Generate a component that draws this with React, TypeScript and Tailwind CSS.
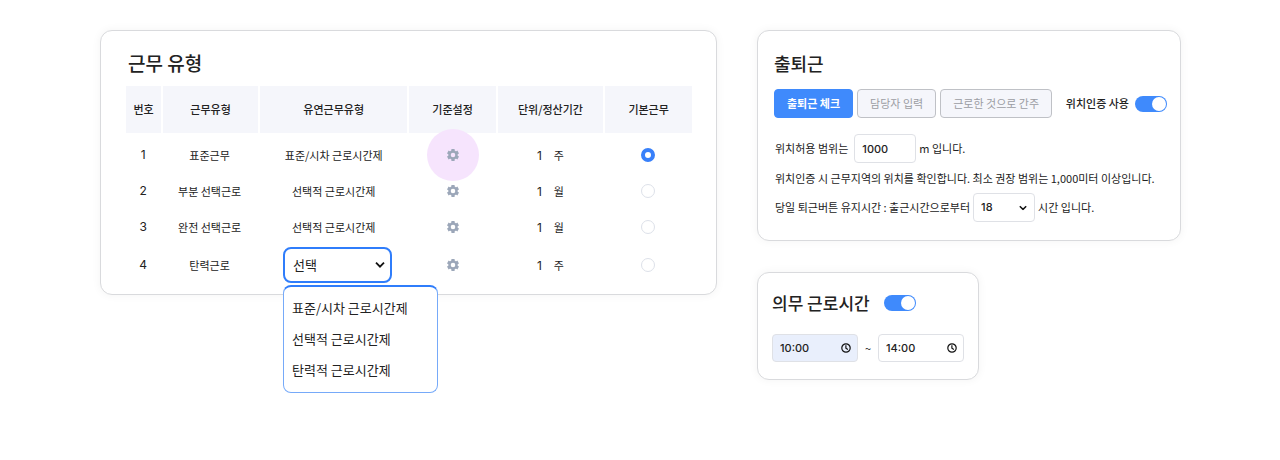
import React, { useState } from "react";

const workTypes = [
  { id: 1, name: "표준근무", flex: "표준/시차 근로시간제", unit: "주" },
  { id: 2, name: "부분 선택근로", flex: "선택적 근로시간제", unit: "월" },
  { id: 3, name: "완전 선택근로", flex: "선택적 근로시간제", unit: "월" },
  { id: 4, name: "탄력근로", flex: "", unit: "주" },
];

const flexOptions = ["표준/시차 근로시간제", "선택적 근로시간제", "탄력적 근로시간제"];

const checkModes = ["출퇴근 체크", "담당자 입력", "근로한 것으로 간주"];

const cardClass =
  "rounded-xl border border-[#d9dadd] bg-white shadow-[0_0_10px_rgba(0,0,0,0.05)]";

const Chevron: React.FC<{ className: string }> = ({ className }) => (
  <svg
    viewBox="0 0 10 7"
    fill="none"
    stroke="#111"
    strokeWidth="1.8"
    aria-hidden="true"
    className={`pointer-events-none absolute top-1/2 -translate-y-1/2 ${className}`}
  >
    <path d="M1 1.2l4 4 4-4" />
  </svg>
);

const GearIcon: React.FC = () => (
  <svg
    viewBox="0 0 12 12"
    fill="none"
    stroke="currentColor"
    aria-hidden="true"
    className="relative size-3"
  >
    <circle cx="6" cy="6" r="3.5" strokeWidth="2.4" />
    <path
      strokeWidth="3.2"
      d="M6 0v2.6M6 9.4V12M0.8 3l2.3 1.3M8.9 7.7L11.2 9M0.8 9l2.3-1.3M8.9 4.3L11.2 3"
    />
  </svg>
);

const Toggle: React.FC<{ label: string }> = ({ label }) => {
  const [on, setOn] = useState(true);
  return (
    <button
      type="button"
      role="switch"
      aria-checked={on}
      aria-label={label}
      onClick={() => setOn(!on)}
      className={`flex h-4 w-8 shrink-0 items-center rounded-full px-px ${
        on ? "justify-end bg-[#3f8afc]" : "justify-start bg-gray-300"
      }`}
    >
      <span className="size-[14px] rounded-full bg-white" />
    </button>
  );
};

const TimeField: React.FC<{ label: string; value: string; active?: boolean }> = ({
  label,
  value,
  active,
}) => (
  <div className="relative">
    <input
      type="text"
      aria-label={label}
      defaultValue={value}
      className={`block h-7 w-[86px] rounded border border-[#dfe1e6] pl-[7px] font-['Inter',sans-serif] text-[11px] font-medium text-[#222] ${
        active ? "bg-[#e9effc]" : "bg-white"
      }`}
    />
    <svg
      viewBox="0 0 10 10"
      fill="none"
      stroke="#111"
      strokeWidth="1.2"
      aria-hidden="true"
      className="pointer-events-none absolute right-[7px] top-1/2 size-[10px] -translate-y-1/2"
    >
      <circle cx="5" cy="5" r="4.2" />
      <path d="M4.9 2.3v2.9l2 1.3" />
    </svg>
  </div>
);

const WorkTypeCard: React.FC = () => {
  const [selected, setSelected] = useState(1);

  return (
    <section className={`${cardClass} pb-[9px] pl-[25px] pr-6 pt-[18px]`}>
      <h2 className="mb-[9px] pl-[2px] text-[19px] font-medium leading-7">근무 유형</h2>
      <table className="w-full table-fixed border-collapse text-center text-[11px]">
        <colgroup>
          <col className="w-[6.4%]" />
          <col className="w-[17.1%]" />
          <col className="w-[26.4%]" />
          <col className="w-[15.6%]" />
          <col className="w-[19%]" />
          <col className="w-[15.5%]" />
        </colgroup>
        <thead>
          <tr className="h-[47px]">
            {["번호", "근무유형", "유연근무유형", "기준설정", "단위/정산기간", "기본근무"].map(
              (head) => (
                <th
                  key={head}
                  className="border-r-2 border-white bg-[#f5f6fb] bg-clip-padding font-medium last:border-r-0"
                >
                  {head}
                </th>
              )
            )}
          </tr>
        </thead>
        <tbody className="before:block before:h-1">
          {workTypes.map((row) => (
            <tr key={row.id} className="h-9 last:h-10">
              <td className="pr-[2px] font-['Inter',sans-serif] text-xs">{row.id}</td>
              <td className="pr-[2px]">{row.name}</td>
              <td>
                {row.flex || (
                  <div className="relative ml-6 w-[109px] text-[13px]">
                    <select
                      aria-label="유연근무유형"
                      className="block h-9 w-full appearance-none rounded-lg border-2 border-[#2f7dfb] bg-white pl-2"
                    >
                      <option>선택</option>
                    </select>
                    <Chevron className="right-[7px] w-[10px]" />
                    {/* Option list */}
                    <ul
                      role="listbox"
                      aria-label="유연근무유형"
                      className="absolute left-0 top-[38px] z-10 w-[155px] rounded-lg border border-t-2 border-[#76aaf9] border-t-[#2f7dfb] bg-white pb-[7px] pt-[5px] text-left"
                    >
                      {flexOptions.map((option) => (
                        <li key={option} role="option" aria-selected={false}>
                          <button type="button" className="block h-[31px] w-full pl-2 text-left">
                            {option}
                          </button>
                        </li>
                      ))}
                    </ul>
                  </div>
                )}
              </td>
              <td>
                <button
                  type="button"
                  aria-label={`${row.name} 기준설정`}
                  className="relative mx-auto block size-3 text-[#9ca7b9]"
                >
                  {row.id === 1 && (
                    <span className="absolute left-1/2 top-1/2 size-[52px] -translate-x-1/2 -translate-y-1/2 rounded-full bg-[#f6e4fd]" />
                  )}
                  <GearIcon />
                </button>
              </td>
              <td>
                <span className="mr-3 font-['Inter',sans-serif] text-xs">1</span>
                {row.unit}
              </td>
              <td>
                <input
                  type="radio"
                  name="defaultWork"
                  aria-label={`${row.name} 기본근무`}
                  checked={selected === row.id}
                  onChange={() => setSelected(row.id)}
                  className="mx-auto block size-[14px] appearance-none rounded-full border border-[#dde1e9] bg-white checked:border-4 checked:border-[#3880fa]"
                />
              </td>
            </tr>
          ))}
        </tbody>
      </table>
    </section>
  );
};

const AttendanceCard: React.FC = () => {
  const [mode, setMode] = useState(checkModes[0]);

  return (
    <section className={`${cardClass} pb-[18px] pl-4 pr-[13px] pt-[18px]`}>
      <h2 className="mb-3 text-[18px] font-medium leading-7">출퇴근</h2>
      <div className="flex items-center text-[11px]">
        <div className="flex gap-1">
          {checkModes.map((item) => (
            <button
              key={item}
              type="button"
              onClick={() => setMode(item)}
              className={`h-[29px] whitespace-nowrap rounded border px-3 ${
                item === mode
                  ? "border-[#3f8afc] bg-[#3f8afc] font-bold text-white"
                  : "border-[#bfc1c6] bg-[#f5f6fb] text-[#9b9da3]"
              }`}
            >
              {item}
            </button>
          ))}
        </div>
        <div className="ml-auto flex items-center gap-[6px]">
          <span className="whitespace-nowrap font-medium">위치인증 사용</span>
          <Toggle label="위치인증 사용" />
        </div>
      </div>

      <div className="mt-4 flex flex-col gap-[7px] pl-px text-[11px]">
        <div className="flex items-center">
          <label htmlFor="range">위치허용 범위는</label>
          <input
            id="range"
            type="text"
            defaultValue="1000"
            className="ml-[6px] mr-[3px] h-[29px] w-[62px] rounded border border-[#dfe1e6] bg-white pl-[7px] font-['Inter',sans-serif] font-medium"
          />
          <span>m 입니다.</span>
        </div>
        <p className="whitespace-nowrap leading-4">
          위치인증 시 근무지역의 위치를 확인합니다. 최소 권장 범위는 1,000미터 이상입니다.
        </p>
        <div className="flex items-center">
          <label htmlFor="keep">당일 퇴근버튼 유지시간 : 출근시간으로부터</label>
          <div className="relative mx-[3px]">
            <select
              id="keep"
              className="block h-[29px] w-[62px] appearance-none rounded border border-[#dfe1e6] bg-white pl-[7px] font-['Inter',sans-serif] font-medium"
            >
              <option>18</option>
            </select>
            <Chevron className="right-2 w-2" />
          </div>
          <span>시간 입니다.</span>
        </div>
      </div>
    </section>
  );
};

const CoreTimeCard: React.FC = () => (
  <section className={`${cardClass} w-fit px-[14px] pb-[17px] pt-4`}>
    <div className="mb-[17px] flex items-center gap-[14px]">
      <h2 className="text-[17px] font-medium leading-7">의무 근로시간</h2>
      <Toggle label="의무 근로시간" />
    </div>
    <div className="flex items-center text-[11px]">
      <TimeField label="시작 시간" value="10:00" active />
      <span className="w-5 text-center">~</span>
      <TimeField label="종료 시간" value="14:00" />
    </div>
  </section>
);

const App: React.FC = () => {
  return (
    <main className="grid grid-cols-[617fr_424fr] items-start gap-10 bg-white pb-16 pl-[100px] pr-[99px] pt-[30px] font-['Noto_Sans_CJK_KR',sans-serif] text-[#222]">
      <WorkTypeCard />
      <div className="flex flex-col gap-[31px]">
        <AttendanceCard />
        <CoreTimeCard />
      </div>
    </main>
  );
};

export default App;
